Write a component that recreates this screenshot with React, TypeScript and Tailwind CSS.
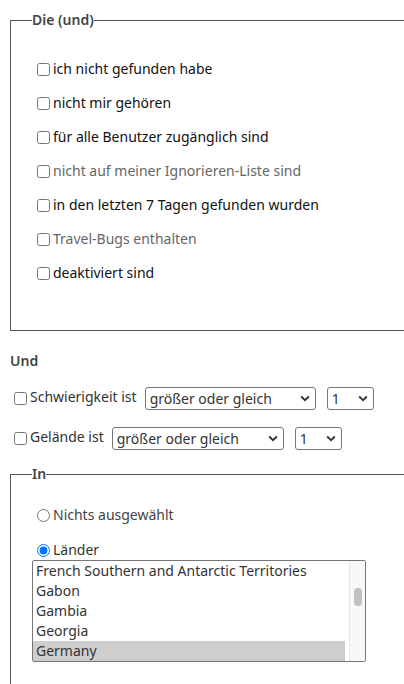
import React from 'react';

const filters = [
  { label: 'ich nicht gefunden habe', muted: false },
  { label: 'nicht mir gehören', muted: false },
  { label: 'für alle Benutzer zugänglich sind', muted: false },
  { label: 'nicht auf meiner Ignorieren-Liste sind', muted: true },
  { label: 'in den letzten 7 Tagen gefunden wurden', muted: false },
  { label: 'Travel-Bugs enthalten', muted: true },
  { label: 'deaktiviert sind', muted: false },
];

const countries = [
  'French Southern and Antarctic Territories',
  'Gabon',
  'Gambia',
  'Georgia',
  'Germany',
];

function Chevron() {
  return (
    <svg width="10" height="7" viewBox="0 0 10 7" className="shrink-0">
      <path d="M1.2 1.5 L5 5.2 L8.8 1.5" fill="none" stroke="#333" strokeWidth="1.8" />
    </svg>
  );
}

function FakeSelect({ value, width }: { value: string; width: string }) {
  return (
    <div
      className={`${width} h-[23px] flex items-center justify-between pl-[4px] pr-[5px] border border-[#767676] rounded-[3px] bg-white text-[14px] text-[#333]`}
    >
      <span className="leading-5">{value}</span>
      <Chevron />
    </div>
  );
}

export default function App() {
  return (
    <div
      className="w-full h-[684px] overflow-hidden bg-white text-[14px] text-[#111]"
      style={{ fontFamily: '"Noto Sans", "Open Sans", sans-serif' }}
    >
      <div className="pl-[10px] pt-[10px] w-[430px]">
        {/* Die (und) */}
        <fieldset className="border border-[#555] pl-[21px] pt-[29px] pb-[47px]">
          <legend className="font-semibold text-[#444] leading-5">Die (und)</legend>
          <div className="flex flex-col gap-[14px]">
            {filters.map((f) => (
              <label key={f.label} className="flex items-center h-5">
                <input type="checkbox" className="ml-[5px] w-[13px] h-[13px]" />
                <span className={`ml-[3px] leading-5 ${f.muted ? 'text-[#666]' : 'text-[#111]'}`}>
                  {f.label}
                </span>
              </label>
            ))}
          </div>
        </fieldset>

        {/* Und */}
        <div className="mt-[20px] h-5 leading-5 font-semibold text-[#444]">Und</div>

        <div className="mt-[16px] flex items-center h-[23px]">
          <input type="checkbox" className="ml-[4px] w-[13px] h-[13px]" />
          <span className="ml-[3px] text-[#333] leading-5 -mt-[3px]">Schwierigkeit ist</span>
          <div className="ml-[8px]">
            <FakeSelect value="größer oder gleich" width="w-[171px]" />
          </div>
          <div className="ml-[11px]">
            <FakeSelect value="1" width="w-[47px]" />
          </div>
        </div>

        <div className="mt-[17px] flex items-center h-[23px]">
          <input type="checkbox" className="ml-[4px] w-[13px] h-[13px]" />
          <span className="ml-[3px] text-[#333] leading-5 -mt-[3px]">Gelände ist</span>
          <div className="ml-[8px]">
            <FakeSelect value="größer oder gleich" width="w-[172px]" />
          </div>
          <div className="ml-[11px]">
            <FakeSelect value="1" width="w-[47px]" />
          </div>
        </div>

        {/* In */}
        <fieldset className="mt-[14px] border border-[#555] pl-[21px] pt-[21px] pb-[40px]">
          <legend className="font-semibold text-[#444] leading-5">In</legend>
          <label className="flex items-center h-5">
            <input type="radio" name="area" className="ml-[5px] w-[13px] h-[13px]" />
            <span className="ml-[3px] leading-5 text-[#444]">Nichts ausgewählt</span>
          </label>
          <label className="mt-[15px] flex items-center h-5">
            <input type="radio" name="area" defaultChecked className="ml-[5px] w-[13px] h-[13px]" />
            <span className="ml-[3px] leading-5 text-[#333]">Länder</span>
          </label>

          <div className="w-[334px] h-[102px] border border-[#767676] rounded-[2px] flex bg-white">
            <div className="w-[312px] flex flex-col">
              {countries.map((c) => (
                <div
                  key={c}
                  className={`h-5 leading-5 pl-[3px] text-[#333] ${c === 'Germany' ? 'bg-[#cecece]' : ''}`}
                >
                  {c}
                </div>
              ))}
            </div>
            <div className="flex-1 flex justify-end">
              <div className="w-[16px] h-full border-l border-[#e6e6e6] bg-[#f8f8f8] flex justify-center">
                <div className="mt-[27px] w-[8px] h-[18px] rounded-full bg-[#c1c1c1]" />
              </div>
            </div>
          </div>

          <label className="mt-[18px] flex items-center h-5">
            <input type="radio" name="area" className="ml-[5px] w-[13px] h-[13px]" />
            <span className="ml-[3px] leading-5 text-[#444]">Bundesländer / Regionen</span>
          </label>
        </fieldset>
      </div>
    </div>
  );
}
